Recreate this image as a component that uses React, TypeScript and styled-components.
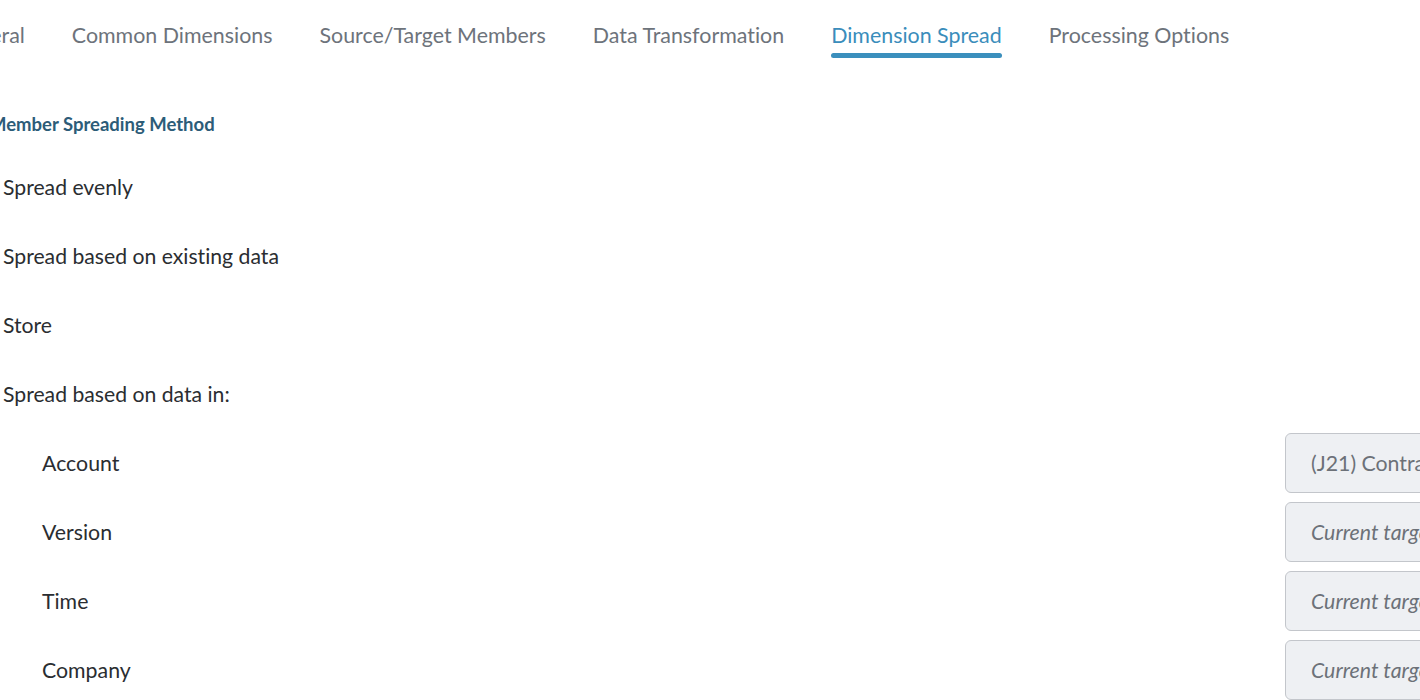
import React from "react";
import styled, { createGlobalStyle } from "styled-components";

const Global = createGlobalStyle`
  html, body { margin: 0; padding: 0; background: #ffffff; overflow: hidden; }
  body {
    font-family: Lato, "Open Sans", sans-serif;
    width: 1420px;
    height: 700px;
    font-variant-ligatures: none;
    font-feature-settings: "liga" 0;
  }
`;

const Page = styled.div`
  width: 1420px;
  height: 700px;
  overflow: hidden;
  position: relative;
`;

const TabBar = styled.nav`
  display: flex;
  gap: 47px;
  height: 70px;
  margin-left: -48.5px;
  padding-top: 21px;
  box-sizing: border-box;
`;

const Tab = styled.div<{ $active?: boolean }>`
  position: relative;
  font-size: 21.4px;
  line-height: 28px;
  height: 37px;
  white-space: nowrap;
  color: ${(p) => (p.$active ? "#3a8dbb" : "#6d737b")};
  &::after {
    content: "";
    display: ${(p) => (p.$active ? "block" : "none")};
    position: absolute;
    left: 0;
    right: 0;
    bottom: 0;
    height: 5px;
    border-radius: 3px;
    background: #3b8fbd;
  }
`;

const Content = styled.div`
  display: flex;
  flex-direction: column;
  padding-top: 44px;
`;

const Heading = styled.div`
  font-size: 18.5px;
  font-weight: 700;
  color: #2c5c78;
  margin-left: -11px;
  height: 20px;
  line-height: 20px;
  margin-bottom: 18px;
`;

const OptionRow = styled.label`
  display: flex;
  align-items: center;
  gap: 10px;
  height: 69px;
  margin-left: -25px;
  font-size: 21.2px;
  color: #2a2d31;
`;

const Radio = styled.span`
  width: 16px;
  height: 16px;
  border-radius: 50%;
  border: 1px solid #8a9099;
  flex: none;
`;

const DimRow = styled.div`
  display: grid;
  grid-template-columns: 1243px 400px;
  align-items: center;
  height: 69px;
  padding-left: 42px;
`;

const DimLabel = styled.span`
  font-size: 21.3px;
  color: #2a2d31;
`;

const Field = styled.div<{ $placeholder?: boolean }>`
  height: 60px;
  box-sizing: border-box;
  border: 1px solid #c3c6cb;
  border-radius: 6px;
  background: #eef0f3;
  display: flex;
  align-items: center;
  padding-left: 25px;
  font-size: 21.3px;
  color: #6c7178;
  font-style: ${(p) => (p.$placeholder ? "italic" : "normal")};
  white-space: nowrap;
`;

const tabs = [
  "General",
  "Common Dimensions",
  "Source/Target Members",
  "Data Transformation",
  "Dimension Spread",
  "Processing Options",
];

const options = [
  "Spread evenly",
  "Spread based on existing data",
  "Store",
  "Spread based on data in:",
];

const dims = [
  { label: "Account", value: "(J21) Contracts", placeholder: false },
  { label: "Version", value: "Current target", placeholder: true },
  { label: "Time", value: "Current target", placeholder: true },
  { label: "Company", value: "Current target", placeholder: true },
];

export default function App() {
  return (
    <Page>
      <Global />
      <TabBar>
        {tabs.map((t) => (
          <Tab key={t} $active={t === "Dimension Spread"}>
            {t}
          </Tab>
        ))}
      </TabBar>
      <Content>
        <Heading>Member Spreading Method</Heading>
        {options.map((o) => (
          <OptionRow key={o}>
            <Radio />
            {o}
          </OptionRow>
        ))}
        {dims.map((d) => (
          <DimRow key={d.label}>
            <DimLabel>{d.label}</DimLabel>
            <Field $placeholder={d.placeholder}>{d.value}</Field>
          </DimRow>
        ))}
      </Content>
    </Page>
  );
}
